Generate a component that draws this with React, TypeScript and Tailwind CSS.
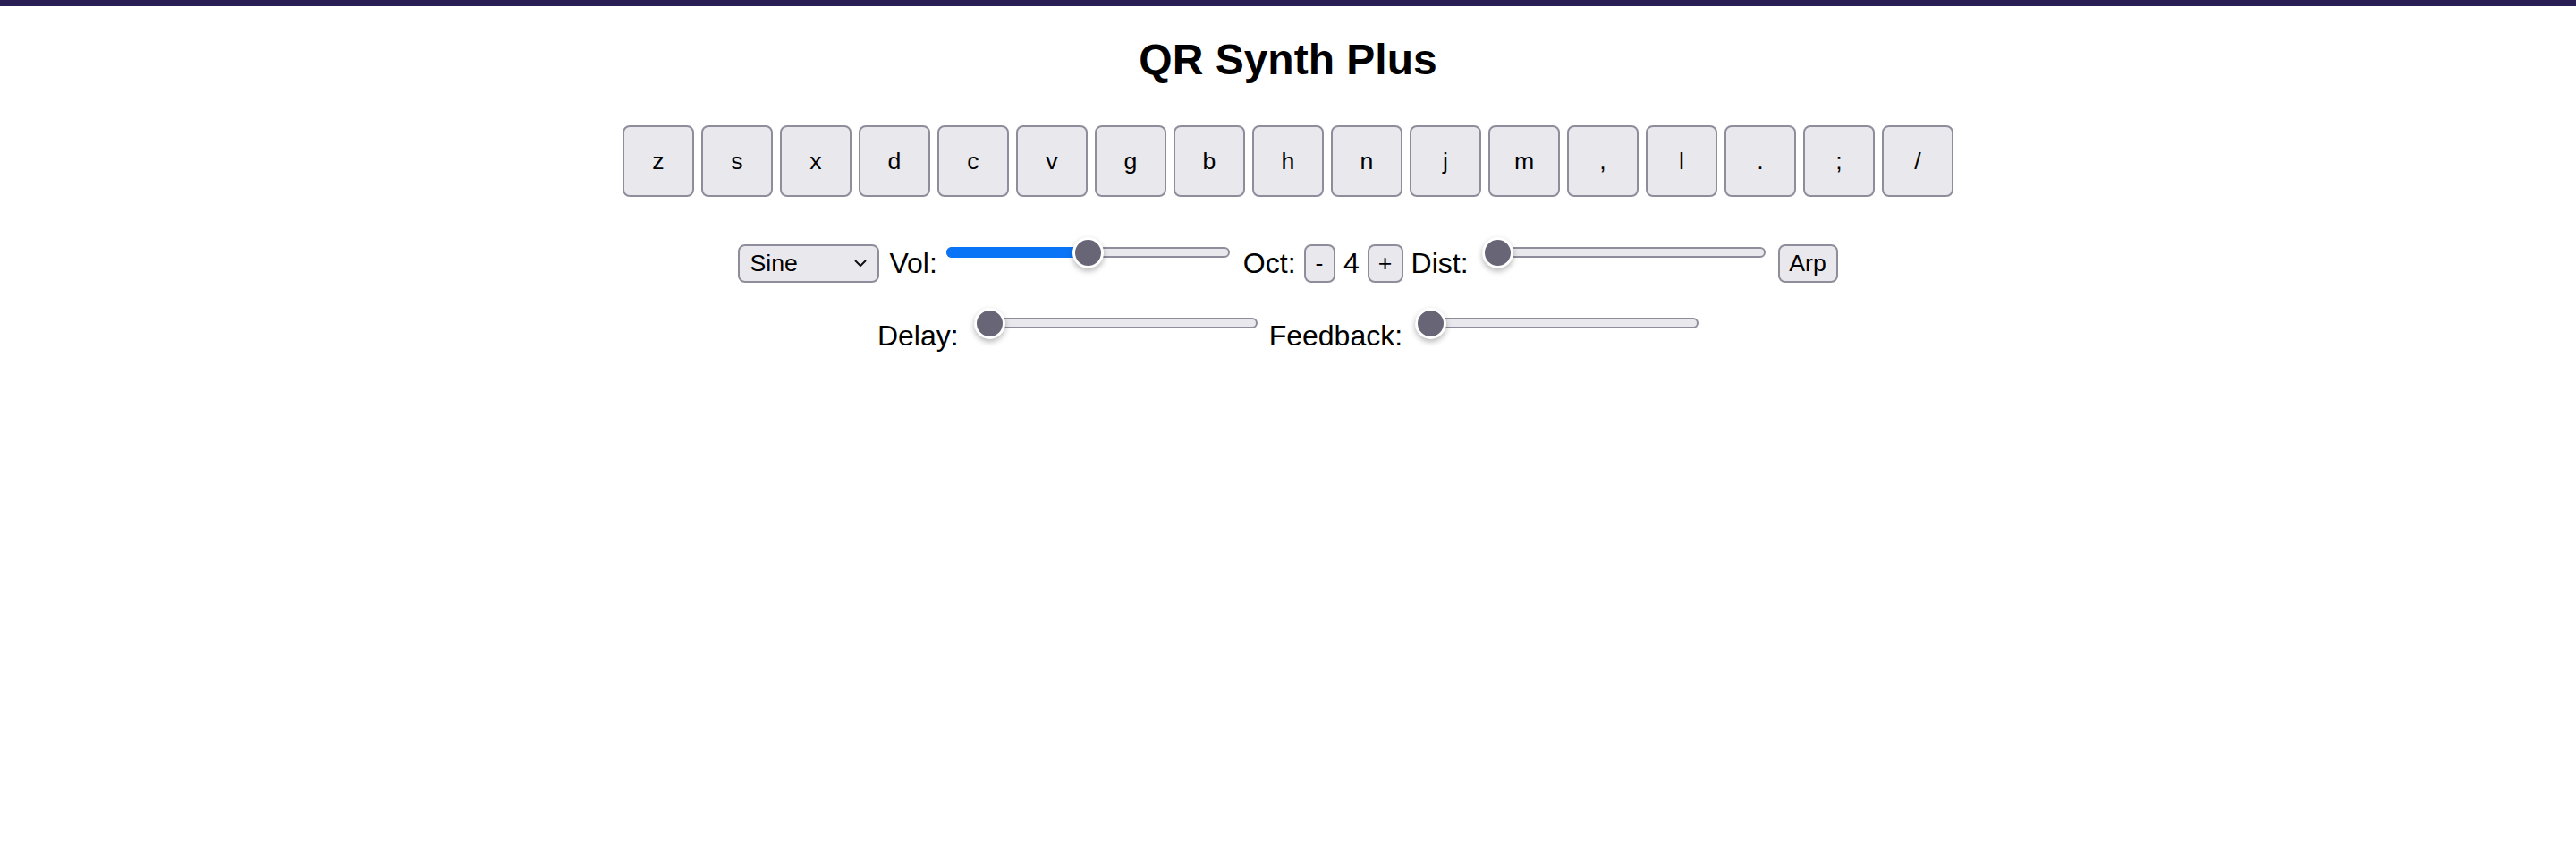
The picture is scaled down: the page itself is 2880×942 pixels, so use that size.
import React from 'react'

const keys = ['z', 's', 'x', 'd', 'c', 'v', 'g', 'b', 'h', 'n', 'j', 'm', ',', 'l', '.', ';', '/']

type SliderProps = {
  value: number
  fill?: boolean
}

// track + thumb, sized like the Safari range input in the shot
const Slider = ({ value, fill }: SliderProps) => {
  const left = value * (317 - 35)
  return (
    <div className="relative h-[35px] w-[317px] shrink-0">
      <div className="absolute left-0 right-0 top-[11px] h-[12px] rounded-full border-2 border-[#8f8d9b] bg-[#e9e8ed]" />
      {fill && (
        <div
          className="absolute left-0 top-[11px] h-[12px] rounded-full bg-[#0a74f6]"
          style={{ width: left + 17.5 }}
        />
      )}
      <div
        className="absolute top-0 h-[35px] w-[35px] rounded-full border-[3px] border-white bg-[#686676] shadow-[0_3px_6px_rgba(0,0,0,0.28)]"
        style={{ left }}
      />
    </div>
  )
}

const btn = 'flex h-[43px] items-center justify-center rounded-[8px] border-2 border-[#8f8d9b] bg-[#e9e8ed] text-[26.67px] leading-none text-black'

export default function App() {
  return (
    <div className="min-h-[942px] bg-white font-['Liberation_Sans',Arial,sans-serif] text-black">
      {/* top accent bar */}
      <div className="h-[7px] bg-[#2a1f54]" />

      <h1 className="mt-[32px] text-center text-[48px] font-bold leading-[55px]">QR Synth Plus</h1>

      {/* keyboard */}
      <div className="mt-[46px] flex justify-center gap-[8px]">
        {keys.map((k) => (
          <button
            key={k}
            className="flex h-[80px] w-[80px] items-center justify-center rounded-[8px] border-2 border-[#8f8d9b] bg-[#e9e8ed] text-[26.67px] text-black"
          >
            {k}
          </button>
        ))}
      </div>

      {/* main controls */}
      <div className="mt-[53px] flex h-[43px] items-center justify-center text-[32px] leading-[37px]">
        <div className="flex h-[43px] w-[158px] items-center justify-between rounded-[8px] border-2 border-[#8f8d9b] bg-[#e9e8ed] pl-[11px] pr-[12px] text-[26.67px]">
          <span>Sine</span>
          <svg width="14" height="9" viewBox="0 0 14 9" fill="none">
            <polyline points="1.5,1.5 7,7 12.5,1.5" stroke="#111" strokeWidth="2" strokeLinecap="round" strokeLinejoin="round" />
          </svg>
        </div>
        <span className="ml-[11px]">Vol:</span>
        <div className="ml-[10px] -mt-[8px] self-start">
          <Slider value={0.5} fill />
        </div>
        <span className="ml-[15px]">Oct:</span>
        <button className={`${btn} ml-[9px] w-[35px]`}>-</button>
        <span className="ml-[9.5px]">4</span>
        <button className={`${btn} ml-[8.7px] w-[40px]`}>+</button>
        <span className="ml-[9px]">Dist:</span>
        <div className="ml-[15px] -mt-[8px] self-start">
          <Slider value={0} />
        </div>
        <button className={`${btn} ml-[14px] w-[67px]`}>Arp</button>
      </div>

      {/* effects */}
      <div className="mt-[27.5px] flex items-start justify-center text-[32px] leading-[37px]">
        <span className="mt-[13.5px]">Delay:</span>
        <div className="ml-[17px]">
          <Slider value={0} />
        </div>
        <span className="ml-[13px] mt-[13.5px]">Feedback:</span>
        <div className="ml-[14px]">
          <Slider value={0} />
        </div>
      </div>
    </div>
  )
}
